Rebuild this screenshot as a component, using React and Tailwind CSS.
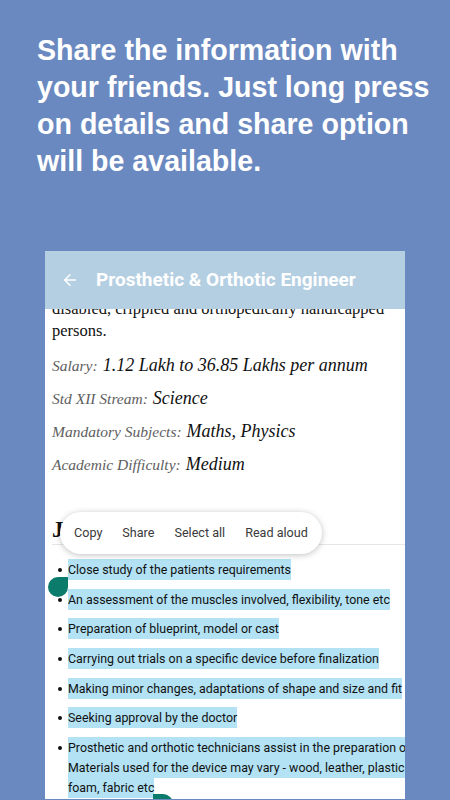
import { ArrowLeft } from "lucide-react";

const details = [
  ["Salary:", "1.12 Lakh to 36.85 Lakhs per annum"],
  ["Std XII Stream:", "Science"],
  ["Mandatory Subjects:", "Maths, Physics"],
  ["Academic Difficulty:", "Medium"],
];

const duties = [
  ["Close study of the patients requirements"],
  ["An assessment of the muscles involved, flexibility, tone etc"],
  ["Preparation of blueprint, model or cast"],
  ["Carrying out trials on a specific device before finalization"],
  ["Making minor changes, adaptations of shape and size and fit"],
  ["Seeking approval by the doctor"],
  [
    "Prosthetic and orthotic technicians assist in the preparation of devices.",
    "Materials used for the device may vary - wood, leather, plastics,",
    "foam, fabric etc",
  ],
];

const Mark = ({ lines }) => (
  <span className="bg-[#b2e2f4] py-[3px] box-decoration-clone">
    {lines.map((line, i) => (
      <span key={i}>
        {line}
        {i < lines.length - 1 && <br />}
      </span>
    ))}
  </span>
);

const App = () => {
  return (
    <div className="w-[450px] h-[800px] overflow-hidden bg-[#6a89c0] font-['Liberation_Sans',Arial,sans-serif]">
      <h1 className="pl-[37px] pr-4 pt-[32px] text-[28.6px] leading-[37px] font-bold text-white">
        Share the information with your friends. Just long press on details
        and share option will be available.
      </h1>

      <div className="relative mt-[71px] ml-[45px] w-[360px] h-[548px] overflow-hidden bg-white">
        <div className="relative z-10 h-[58px] bg-[#b5cfe2] flex items-center pl-[16px] font-['Roboto',sans-serif]">
          <ArrowLeft size={18} strokeWidth={2} className="text-white" />
          <span className="ml-[17px] text-[19px] font-bold text-white">
            Prosthetic &amp; Orthotic Engineer
          </span>
        </div>

        <div className="-mt-[11px] pl-[7px] font-['Liberation_Serif',serif] text-[16.5px] leading-[22px] text-[#111]">
          <p>
            disabled, crippled and orthopedically handicapped
            <br />
            persons.
          </p>
          {details.map(([label, value], i) => (
            <p
              key={label}
              className={`h-[22px] flex items-baseline gap-[5px] italic ${i === 0 ? "mt-[12px]" : "mt-[11px]"}`}
            >
              <span className="text-[#5e5e5e] text-[15.5px]">{label}</span>
              <span className="text-[18px]">{value}</span>
            </p>
          ))}
          <h2 className="mt-[41px] text-[23px] leading-[28px] font-bold">
            Job Description
          </h2>
          <div className="h-px bg-[#e6e6e6]"></div>
        </div>

        <ul className="mt-[15px] w-[440px] pl-[13px] font-['Roboto',sans-serif] text-[12.4px] leading-[20px] text-[#111] whitespace-nowrap">
          {duties.map((lines, i) => (
            <li key={i} className={`flex items-start ${i > 0 ? "mt-[9.7px]" : ""}`}>
              <span className="mt-[8px] w-[4px] h-[4px] rounded-full bg-[#111] shrink-0"></span>
              <span className="ml-[6px]">
                <Mark lines={lines} />
              </span>
            </li>
          ))}
        </ul>

        {/* text selection popup */}
        <div className="absolute left-[15px] top-[261px] z-20 h-[42px] w-[262px] rounded-full bg-white shadow-[0_1px_6px_rgba(0,0,0,0.25)] flex items-center pl-[14px] gap-[20px] font-['Roboto',sans-serif] text-[12.6px] text-[#3a3a3a]">
          <span>Copy</span>
          <span>Share</span>
          <span>Select all</span>
          <span>Read aloud</span>
        </div>

        {/* selection handles */}
        <div className="absolute left-[3px] top-[326px] z-20 w-[20px] h-[20px] rounded-full rounded-tr-none bg-[#0b7b6c]"></div>
        <div className="absolute left-[108px] top-[543px] z-20 w-[20px] h-[20px] rounded-full rounded-tl-none bg-[#0b7b6c]"></div>
      </div>
    </div>
  );
};

export default App;
